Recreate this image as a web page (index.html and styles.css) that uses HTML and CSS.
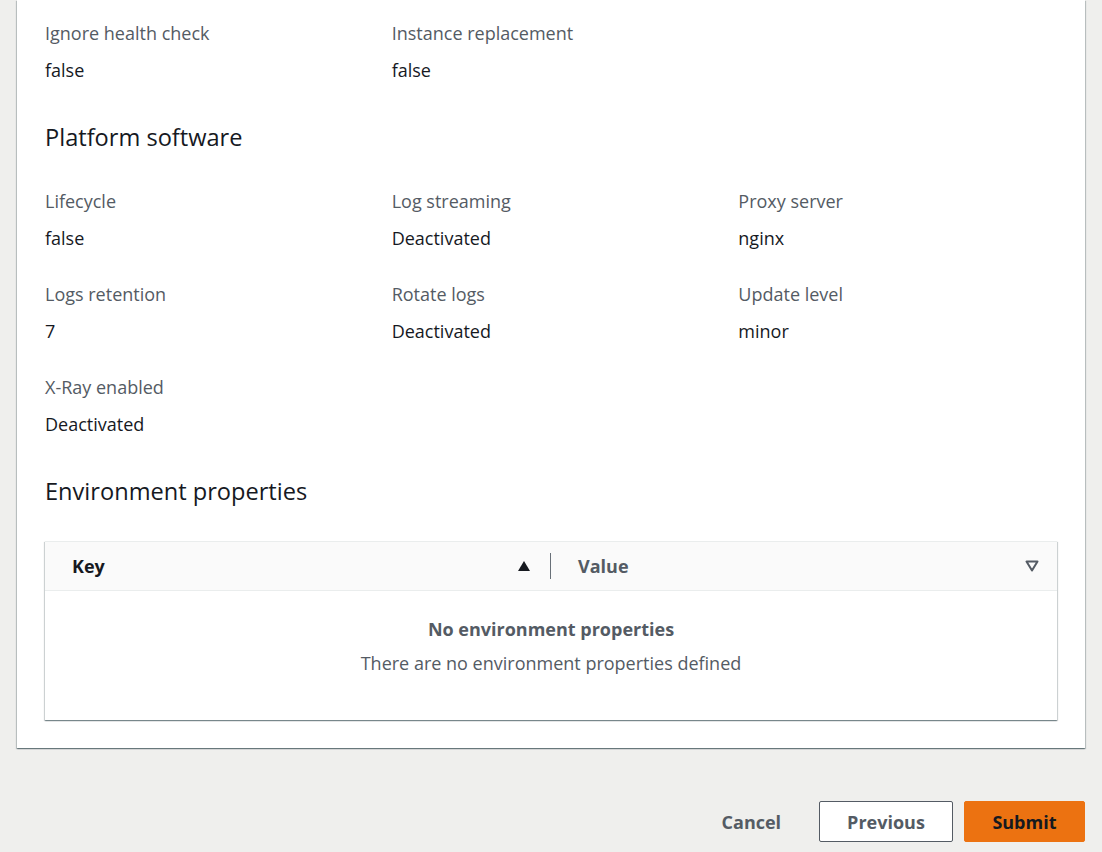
FILE: index.html
```html
<!DOCTYPE html>
<html lang="en">
<head>
<meta charset="utf-8">
<title>Review</title>
<link rel="stylesheet" href="styles.css">
</head>
<body>
<div class="card">
  <div class="grid first">
    <div class="item"><div class="label">Ignore health check</div><div class="value">false</div></div>
    <div class="item"><div class="label">Instance replacement</div><div class="value">false</div></div>
  </div>

  <h2 class="heading">Platform software</h2>
  <div class="grid">
    <div class="item"><div class="label">Lifecycle</div><div class="value">false</div></div>
    <div class="item"><div class="label">Log streaming</div><div class="value">Deactivated</div></div>
    <div class="item"><div class="label">Proxy server</div><div class="value">nginx</div></div>
    <div class="item"><div class="label">Logs retention</div><div class="value">7</div></div>
    <div class="item"><div class="label">Rotate logs</div><div class="value">Deactivated</div></div>
    <div class="item"><div class="label">Update level</div><div class="value">minor</div></div>
    <div class="item"><div class="label">X-Ray enabled</div><div class="value">Deactivated</div></div>
  </div>

  <h2 class="heading env">Environment properties</h2>
  <div class="table">
    <div class="thead">
      <div class="th key">
        <span>Key</span>
        <svg class="sort" width="14" height="12" viewBox="0 0 14 12"><path d="M7 1 L13 11 L1 11 Z" fill="#16191f"/></svg>
      </div>
      <div class="divider"></div>
      <div class="th val">
        <span>Value</span>
        <svg class="sort" width="14" height="12" viewBox="0 0 14 12"><path d="M1.5 1.5 L12.5 1.5 L7 10.5 Z" fill="none" stroke="#545b64" stroke-width="2" stroke-linejoin="round"/></svg>
      </div>
    </div>
    <div class="tbody">
      <div class="empty-title">No environment properties</div>
      <div class="empty-text">There are no environment properties defined</div>
    </div>
  </div>
</div>

<div class="actions">
  <button class="btn link">Cancel</button>
  <button class="btn normal">Previous</button>
  <button class="btn primary">Submit</button>
</div>
</body>
</html>
```

FILE: styles.css
```css
* { box-sizing: border-box; }

body {
  margin: 0;
  background: #efefed;
  font-family: "Open Sans", "Noto Sans", Arial, sans-serif;
  font-size: 18px;
  color: #16191f;
}

.card {
  margin-left: 17px;
  width: 1068px;
  background: #ffffff;
  padding: 21px 28px 28px;
  box-shadow: 0 1px 1px 0 rgba(0, 28, 36, 0.35), 1px 1px 1px 0 rgba(0, 28, 36, 0.18), -1px 1px 1px 0 rgba(0, 28, 36, 0.18);
}

.grid {
  display: grid;
  grid-template-columns: repeat(3, 1fr);
  column-gap: 28px;
  row-gap: 32px;
}

.label {
  color: #545b64;
  line-height: 24px;
}

.value {
  color: #16191f;
  line-height: 24px;
  margin-top: 13px;
}

.heading {
  margin: 40px 0 37px;
  font-size: 23.6px;
  font-weight: 400;
  line-height: 30px;
  color: #16191f;
}

.heading.env {
  margin-bottom: 35px;
}

.table {
  border-top: 1px solid #eaeded;
  box-shadow: 0 1px 1px 0 rgba(0, 28, 36, 0.35), 1px 1px 1px 0 rgba(0, 28, 36, 0.15), -1px 1px 1px 0 rgba(0, 28, 36, 0.15);
  background: #ffffff;
}

.thead {
  display: flex;
  align-items: center;
  height: 49px;
  background: #fafafa;
  border-bottom: 1px solid #eaeded;
}

.th {
  display: flex;
  align-items: center;
  justify-content: space-between;
  font-weight: 700;
  height: 100%;
}

.th.key {
  width: 505px;
  padding: 0 19px 0 27px;
  color: #16191f;
}

.th.val {
  flex: 1;
  padding: 0 18px 0 27px;
  color: #545b64;
}

.divider {
  width: 1px;
  height: 26px;
  background: #687078;
}

.tbody {
  padding: 26px 20px 45px;
  text-align: center;
  color: #545b64;
}

.empty-title {
  font-weight: 700;
  line-height: 24px;
}

.empty-text {
  line-height: 24px;
  margin-top: 10px;
}

.actions {
  display: flex;
  justify-content: flex-end;
  gap: 11px;
  width: 1085px;
  margin-top: 53px;
}

.btn {
  font-family: inherit;
  font-size: 18px;
  font-weight: 700;
  height: 41px;
  padding: 0 27px;
  border-radius: 2px;
  border: 1px solid transparent;
  background: transparent;
  cursor: pointer;
}

.btn.link {
  color: #545b64;
  padding-right: 26px;
}

.btn.normal {
  background: #ffffff;
  border-color: #545b64;
  color: #545b64;
}

.btn.primary {
  background: #ec7211;
  border-color: #ec7211;
  color: #16191f;
  padding: 0 27.5px;
}
```
